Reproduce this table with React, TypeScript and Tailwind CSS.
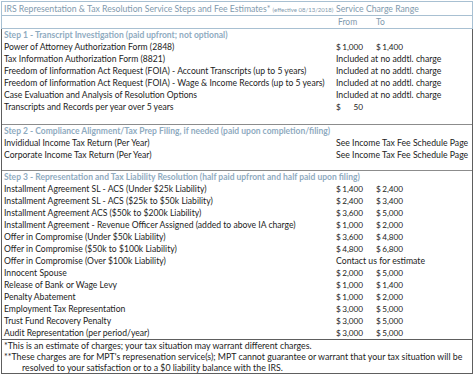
import React from 'react';

type Row = { label: string; from?: string; to?: string; note?: string };

const step1: Row[] = [
    { label: 'Power of Attorney Authorization Form (2848)', from: '1,000', to: '1,400' },
    { label: 'Tax Information Authorization Form (8821)', note: 'Included at no addtl. charge' },
    { label: 'Freedom of Iinformation Act Request (FOIA) - Account Transcripts (up to 5 years)', note: 'Included at no addtl. charge' },
    { label: 'Freedom of Iinformation Act Request (FOIA) - Wage & Income Records (up to 5 years)', note: 'Included at no addtl. charge' },
    { label: 'Case Evaluation and Analysis of Resolution Options', note: 'Included at no addtl. charge' },
    { label: 'Transcripts and Records per year over 5 years', from: '50' },
];

const step2: Row[] = [
    { label: 'Invididual Income Tax Return (Per Year)', note: 'See Income Tax Fee Schedule Page' },
    { label: 'Corporate Income Tax Return (Per Year)', note: 'See Income Tax Fee Schedule Page' },
];

const step3: Row[] = [
    { label: 'Installment Agreement SL - ACS (Under $25k Liability)', from: '1,400', to: '2,400' },
    { label: 'Installment Agreement SL - ACS ($25k to $50k Liability)', from: '2,400', to: '3,400' },
    { label: 'Installment Agreement ACS ($50k to $200k Liability)', from: '3,600', to: '5,000' },
    { label: 'Installment Agreement - Revenue Officer Assigned (added to above IA charge)', from: '1,000', to: '2,000' },
    { label: 'Offer in Compromise (Under $50k Liability)', from: '3,600', to: '4,800' },
    { label: 'Offer in Compromise ($50k to $100k Liability)', from: '4,800', to: '6,800' },
    { label: 'Offer in Compromise (Over $100k Liability)', note: 'Contact us for estimate' },
    { label: 'Innocent Spouse', from: '2,000', to: '5,000' },
    { label: 'Release of Bank or Wage Levy', from: '1,000', to: '1,400' },
    { label: 'Penalty Abatement', from: '1,000', to: '2,000' },
    { label: 'Employment Tax Representation', from: '3,000', to: '5,000' },
    { label: 'Trust Fund Recovery Penalty', from: '3,000', to: '5,000' },
    { label: 'Audit Representation (per period/year)', from: '3,000', to: '5,000' },
];

const Money = ({ value }: { value?: string }) => (
    <div className="w-[40px] flex justify-between pr-[13px]">
        {value && (
            <>
                <span>$</span>
                <span>{value}</span>
            </>
        )}
    </div>
);

const FeeRow = ({ row }: { row: Row }) => (
    <div className="flex h-[12px] leading-[12px] whitespace-nowrap">
        <div className="w-[332px] pl-[2px] text-[8.6px]">{row.label}</div>
        {row.note ? (
            <div className="pl-[2px] text-[8.7px]">{row.note}</div>
        ) : (
            <div className="flex pl-[2px] text-[8.2px]">
                <Money value={row.from} />
                <Money value={row.to} />
            </div>
        )}
    </div>
);

const StepTitle = ({ children }: { children: React.ReactNode }) => (
    <div className="h-[12px] leading-[12px] pl-[2px] text-[8.5px] font-bold text-[#8fabbf] whitespace-nowrap">
        {children}
    </div>
);

export default function App() {
    return (
        <div className="w-[474px] h-[375px] bg-white pt-[1px] px-[1px] font-['Lato','Open_Sans',sans-serif] text-[#1c1c1c]">
            {/* Header */}
            <div className="border border-[#a8c0d2] text-[#7f9aae]">
                <div className="flex h-[14px] leading-[13px] border-b border-[#a8c0d2] whitespace-nowrap">
                    <div className="w-[332px] pl-[2px] text-[8.7px]">
                        IRS Representation &amp; Tax Resolution Service Steps and Fee Estimates*{' '}
                        <span className="text-[6px]">(effective 08/13/2018)</span>
                    </div>
                    <div className="pl-[2px] text-[8.7px]">Service Charge Range</div>
                </div>
                <div className="flex h-[12px] leading-[12px] text-[8.5px]">
                    <div className="w-[332px]" />
                    <div className="flex pl-[2px]">
                        <div className="w-[40px] pl-[2px]">From</div>
                        <div className="w-[40px]">To</div>
                    </div>
                </div>
            </div>

            {/* Body */}
            <div className="border-x border-b border-[#5e5e5e]">
                <div className="h-[95px]">
                    <StepTitle>Step 1 - Transcript Investigation (paid upfront; not optional)</StepTitle>
                    {step1.map((r, i) => (
                        <FeeRow key={i} row={r} />
                    ))}
                </div>
                <div className="border-t border-[#8c8c8c] h-[46px]">
                    <StepTitle>Step 2 - Compliance Alignment/Tax Prep Filing, if needed (paid upon completion/filing)</StepTitle>
                    {step2.map((r, i) => (
                        <FeeRow key={i} row={r} />
                    ))}
                </div>
                <div className="border-t border-[#8c8c8c]">
                    <StepTitle>Step 3 - Representation and Tax Liability Resolution (half paid upfront and half paid upon filing)</StepTitle>
                    {step3.map((r, i) => (
                        <FeeRow key={i} row={r} />
                    ))}
                </div>
                <div className="border-t border-[#5e5e5e] leading-[11px] pl-[2px] text-[8.8px] whitespace-nowrap">
                    <div>*This is an estimate of charges; your tax situation may warrant different charges.</div>
                    <div>**These charges are for MPT's represenation service(s); MPT cannot guarantee or warrant that your tax situation will be</div>
                    <div className="pl-[18px]">resolved to your satisfaction or to a $0 liability balance with the IRS.</div>
                </div>
            </div>
        </div>
    );
}
